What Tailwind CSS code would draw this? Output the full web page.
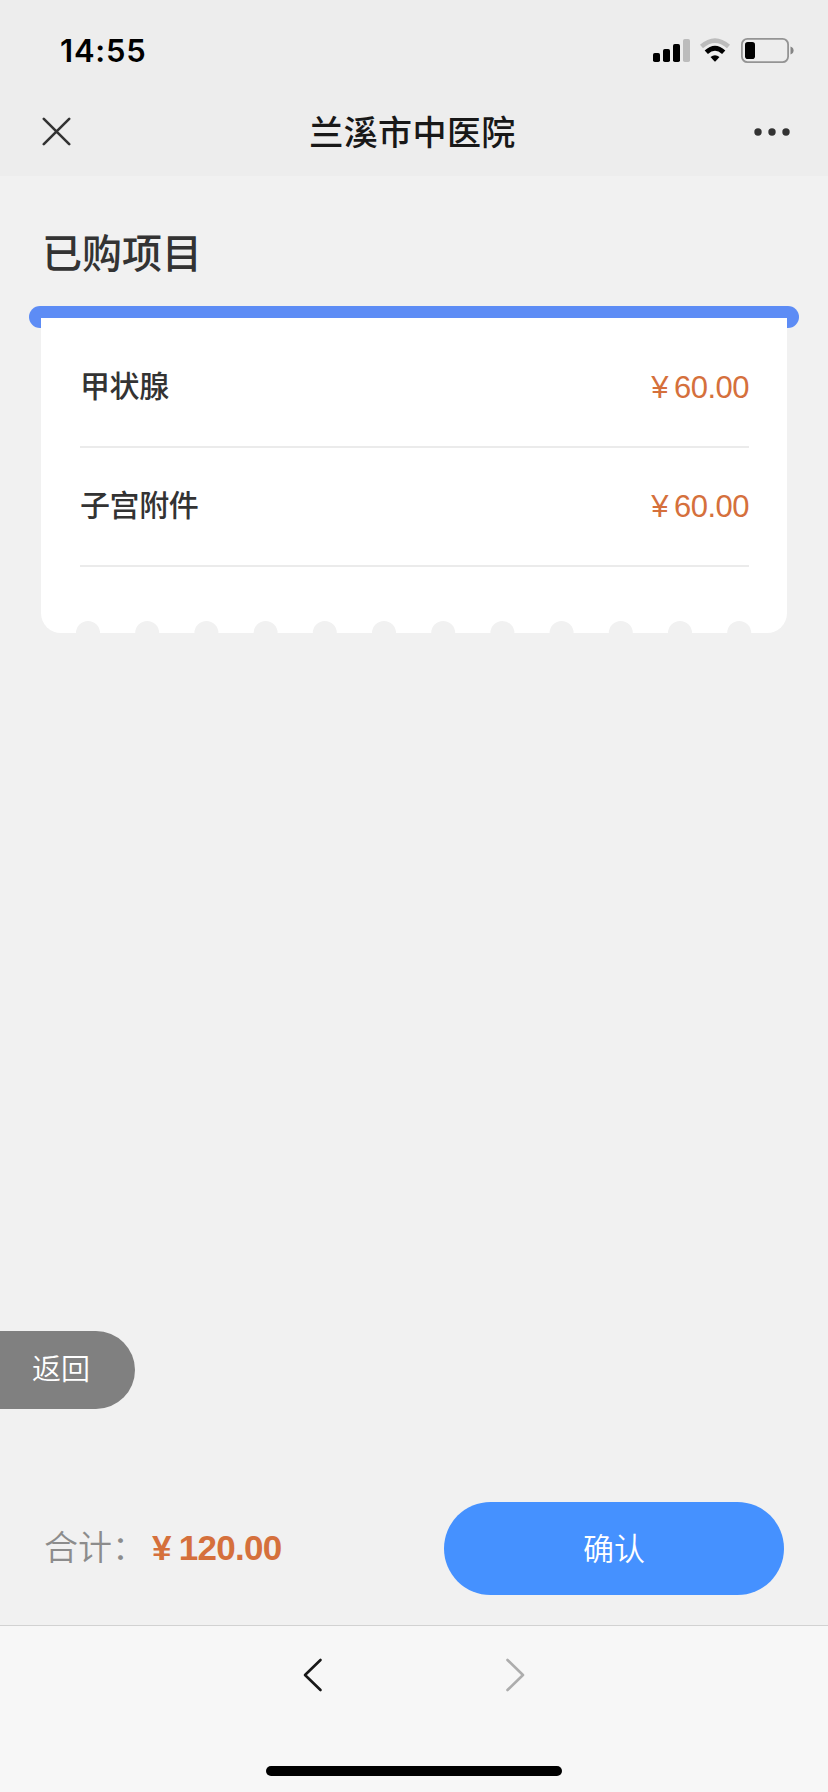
<!DOCTYPE html>
<html lang="zh-CN">
<head>
<meta charset="utf-8">
<title>兰溪市中医院</title>
<script src="https://cdn.jsdelivr.net/npm/@tailwindcss/browser@4"></script>
</head>
<body class="w-[828px] h-[1792px] flex flex-col overflow-hidden bg-[#f1f1f1] text-[#333] font-['Liberation_Sans','Noto_Sans_CJK_SC',sans-serif]">
  <header class="h-44 shrink-0 bg-[#ededed]">
    <div class="h-[88px] pt-3 pl-[60px] pr-[34px] flex items-center justify-between">
      <span class="font-['Inter',sans-serif] font-semibold text-[31px] leading-none tracking-[0.8px] text-black">14:55</span>
      <div class="flex items-center">
        <svg class="w-[37px] h-[23px]" viewBox="0 0 37 23">
          <rect x="0" y="14" width="7" height="9" rx="1.8"/>
          <rect x="10" y="10" width="7" height="13" rx="1.8"/>
          <rect x="20" y="5" width="7" height="18" rx="1.8"/>
          <rect x="30" y="0" width="7" height="23" rx="1.8" fill="#bcbcbc"/>
        </svg>
        <svg class="w-8 h-6 ml-[9px]" viewBox="0 0 32 24">
          <path d="M2.5 8.6Q16 -3.2 29.500 8.600" fill="none" stroke="#bcbcbc" stroke-width="4.600"/>
          <path d="M7.300 14.200Q16 6.200 24.700 14.200" fill="none" stroke="#000" stroke-width="4.800"/>
          <path d="M11.500 19Q16 15.400 20.500 19L16.600 23.200Q16 23.800 15.400 23.200Z"/>
        </svg>
        <svg class="w-[53px] h-[25px] ml-[10px]" viewBox="0 0 53 25">
          <rect x="0.900" y="0.900" width="46.200" height="23.200" rx="5.500" fill="none" stroke="#949494" stroke-width="1.800"/>
          <rect x="4" y="4" width="10" height="17" rx="2.800"/>
          <path d="M49.500 8.500Q52.600 9.600 52.600 12.500T49.500 16.500Z" fill="#858585"/>
        </svg>
      </div>
    </div>
    <div class="h-[88px] px-[42px] flex items-center justify-between">
      <svg class="w-[29px] h-[29px] mb-px" viewBox="0 0 29 29" fill="none" stroke="#333" stroke-width="2.600" stroke-linecap="round"><path d="M1.800 1.800L27.200 27.200M27.200 1.800L1.800 27.200"/></svg>
      <h1 class="text-[34px] leading-none font-medium text-[#181818] tracking-[0.4px] pt-[2px]">兰溪市中医院</h1>
      <svg class="w-9 h-2 -mr-[4px]" viewBox="0 0 36 8" fill="#333"><circle cx="4" cy="4" r="3.700"/><circle cx="18" cy="4" r="3.700"/><circle cx="32" cy="4" r="3.700"/></svg>
    </div>
  </header>

  <main class="flex-1 flex flex-col items-start">
    <h2 class="h-[130px] pt-[26px] pl-[42px] flex items-center text-[40px] leading-none font-medium">已购项目</h2>
    <section class="w-full px-[29px]">
      <div class="h-[22px] rounded-full bg-[#5d8cf5]"></div>
      <div class="relative -mt-[10px] ml-3 w-[746px] h-[315px] px-[39px] bg-white rounded-b-[20px] overflow-hidden">
        <div class="h-[130px] pt-[10px] border-b-2 border-[#ebebeb] flex items-center justify-between text-[30px] leading-none w-[669px]">
          <span class="tracking-[-0.4px] font-medium">甲状腺</span><span class="text-[31px] tracking-[-0.5px] text-[#d5703c]"><span class="mr-[6px]">¥</span>60.00</span>
        </div>
        <div class="h-[119px] pb-px border-b-2 border-[#ebebeb] flex items-center justify-between text-[30px] leading-none w-[669px]">
          <span class="tracking-[-0.4px] font-medium">子宫附件</span><span class="text-[31px] tracking-[-0.5px] text-[#d5703c]"><span class="mr-[6px]">¥</span>60.00</span>
        </div>
        <svg class="absolute bottom-0 left-0 w-[746px] h-3" viewBox="0 0 746 12" fill="#f1f1f1">
          <circle cx="47" cy="12" r="12"/><circle cx="106.200" cy="12" r="12"/><circle cx="165.400" cy="12" r="12"/><circle cx="224.600" cy="12" r="12"/><circle cx="283.800" cy="12" r="12"/><circle cx="343" cy="12" r="12"/><circle cx="402.200" cy="12" r="12"/><circle cx="461.400" cy="12" r="12"/><circle cx="520.600" cy="12" r="12"/><circle cx="579.800" cy="12" r="12"/><circle cx="639" cy="12" r="12"/><circle cx="698.200" cy="12" r="12"/>
        </svg>
      </div>
    </section>
    <button class="mt-auto w-[135px] h-[78px] pl-8 rounded-r-full bg-[#808080] text-white text-[29px] leading-none text-left font-[350]">返回</button>
    <div class="mt-[93px] mb-[30px] w-full pl-[44px] pr-11 h-[93px] flex items-center justify-between">
      <div class="flex items-center leading-none text-[34px] pb-[2px]">
        <span class="w-[108px] text-[#8c8c8c] font-[350] whitespace-nowrap">合计：</span>
        <span class="font-bold text-[35px] tracking-[-0.7px] pb-px text-[#d5703c]"><span class="mr-[8px]">¥</span>120.00</span>
      </div>
      <button class="w-[340px] h-[93px] pt-[2px] rounded-full bg-[#4591ff] text-white text-[31px] leading-none font-[350]">确认</button>
    </div>
  </main>

  <footer class="h-[167px] shrink-0 border-t border-[#d2d2d2] bg-[#f7f7f7] flex flex-col items-center justify-between pt-8 pb-4">
    <div class="flex gap-[182px]">
      <svg class="w-5 h-[34px]" viewBox="0 0 20 34" fill="none" stroke="#181818" stroke-width="2.600" stroke-linecap="round" stroke-linejoin="round"><path d="M17.500 2L2 17L17.500 32"/></svg>
      <svg class="w-5 h-[34px]" viewBox="0 0 20 34" fill="none" stroke="#adadad" stroke-width="2.600" stroke-linecap="round" stroke-linejoin="round"><path d="M2.500 2L18 17L2.500 32"/></svg>
    </div>
    <div class="w-[296px] h-[10px] rounded-full bg-black"></div>
  </footer>
</body>
</html>
